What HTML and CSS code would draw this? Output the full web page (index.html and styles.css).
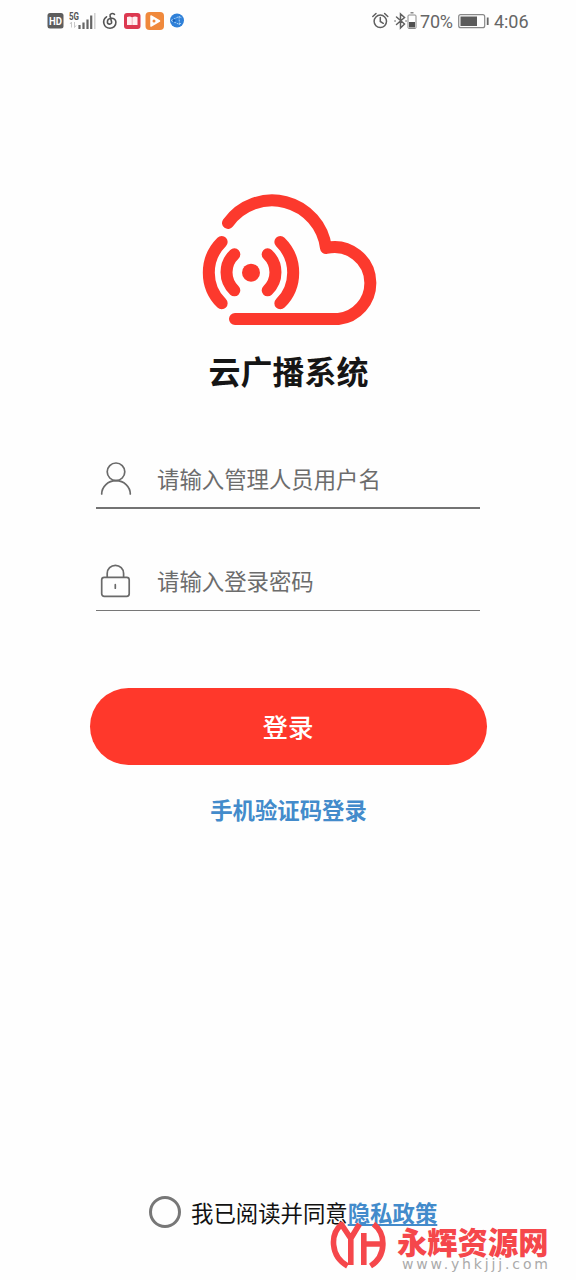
FILE: index.html
```html
<!DOCTYPE html>
<html lang="zh-CN">
<head>
<meta charset="utf-8">
<title>云广播系统</title>
<link rel="stylesheet" href="styles.css">
</head>
<body>
<main class="screen">
  <header class="status">
    <svg class="status-left" viewBox="0 0 150 32" width="150" height="32">
      <rect x="7.500" y="8" width="16" height="15.500" rx="2.500" fill="#5d5d5d"/>
      <text x="9" y="19.700" class="hd" textLength="13" lengthAdjust="spacingAndGlyphs">HD</text>
      <text x="29" y="14.500" class="net" textLength="10" lengthAdjust="spacingAndGlyphs">5G</text>
      <path d="M31.500 17v5.500M30 19l1.500-2M34.500 17v5.500l1.500-2" stroke="#c9c9c9" fill="none"/>
      <path d="M39.500 20v4M43.500 17.500V24M47.500 14.500V24M51.200 10.500V24" stroke="#666" stroke-width="2.200"/>
      <path d="M54.800 8v16" stroke="#d0d0d0" stroke-width="1.500"/>
      <path d="M74.500 9.300c-2-1.500-5-.5-4.400 1.900l1.500 5.800c.4 2.700-4 2.800-4.200.2-.2-4.700 8.200-5.700 8.500-.2.200 4-2.700 6.200-5.900 6.200-6.800-.2-8.200-8.200-3.500-11.400" fill="none" stroke="#555" stroke-width="1.600" stroke-linecap="round"/>
      <rect x="84" y="8" width="16.500" height="16" rx="3" fill="#dc3850"/>
      <path d="M87 12q3-1 5.200.4 2.200-1.400 5.300-.4v8H87z" fill="#ffeef0"/>
      <path d="M92.200 12.500V20" stroke="#efa3ae" stroke-width=".8"/>
      <rect x="105.500" y="7" width="18.500" height="18" rx="4" fill="#f0893c"/>
      <path d="M111 11l8.500 5-8.500 5z" fill="#fff" stroke="#fff" stroke-width="1.500" stroke-linejoin="round"/>
      <circle cx="114" cy="16" r="1.500" fill="#f0893c"/>
      <circle cx="137" cy="15.500" r="7" fill="#2f80d8"/>
      <path d="M131 15.500l8-4 .5 8zM139 11.500l3 1.500M139.500 19.500l2-2" fill="none" stroke="#b9dcfb" stroke-width=".9" stroke-dasharray="2 1"/>
      <circle cx="134" cy="15.500" r="1.300" fill="#145bb5"/>
    </svg>
    <svg class="status-right" viewBox="0 0 170 32" width="170" height="32">
      <g fill="none" stroke="#606060" stroke-width="1.500" stroke-linecap="round">
        <circle cx="15.300" cy="16.300" r="6.200"/>
        <path d="M15.300 12.500v4l3 1.800M7.800 11.500l3.200-3M22.800 11.500l-3.200-3"/>
        <path d="M31.500 12l8 7-4 4V9l4 3.500-8 7M30 16h.1M41 16h.1"/>
      </g>
      <rect x="43" y="10" width="8" height="13.500" rx="1" fill="none" stroke="#888"/>
      <path d="M45.500 7.800h3" stroke="#777" stroke-width="1.300"/>
      <rect x="44" y="17" width="6" height="5.500" fill="#505050"/>
      <text x="55" y="22.500" class="clock" textLength="33">70%</text>
      <rect x="93.700" y="9.700" width="26" height="13" rx="2" fill="none" stroke="#888" stroke-width="1.200"/>
      <rect x="95.500" y="11.500" width="16.500" height="9.500" fill="#5b5b5b"/>
      <path d="M122.700 12.500v7.500" stroke="#666" stroke-width="1.800"/>
      <text x="129" y="22.500" class="clock" textLength="34.500">4:06</text>
    </svg>
  </header>

  <section class="brand">
    <svg class="logo" viewBox="0 0 600 450">
      <g fill="none" stroke="#fc392d" stroke-width="36" stroke-linecap="round" stroke-linejoin="round">
        <path d="M114 114A163 163 0 0 1 408 189A108 108 0 0 1 541 293A108 108 0 0 1 445 402H135"/>
        <path d="M95 171A129 129 0 0 0 95 355M271 171A129 129 0 0 1 271 355"/>
        <path d="M133 208A74 74 0 0 0 133 316M233 208A74 74 0 0 1 233 316"/>
      </g>
      <circle cx="183" cy="263" r="27" fill="#fc392d"/>
    </svg>
    <h1 class="title">云广播系统</h1>
  </section>

  <form class="form">
    <label class="field field-user">
      <svg class="field-icon" viewBox="0 0 36 38" fill="none" stroke="#6a6a6a" stroke-width="1.700" stroke-linecap="round">
        <circle cx="20" cy="10.800" r="8.800"/>
        <path d="M5.700 33a14.300 13.400 0 0 1 28.600 0"/>
      </svg>
      <span>请输入管理人员用户名</span>
    </label>
    <label class="field field-password">
      <svg class="field-icon" viewBox="0 0 36 38" fill="none" stroke="#6a6a6a" stroke-width="1.700" stroke-linecap="round">
        <rect x="5.700" y="15.300" width="27.500" height="19" rx="2.500"/>
        <path d="M11.200 15V11.500a8.200 8.200 0 0 1 16.400 0v3.500M19.300 22.700v3.500"/>
      </svg>
      <span>请输入登录密码</span>
    </label>
    <button class="submit" type="button">登录</button>
    <a class="sms">手机验证码登录</a>
  </form>

  <footer class="agree">
    <span class="radio"></span>
    <span class="agree-text">我已阅读并同意<a class="policy">隐私政策</a></span>
  </footer>

  <aside class="watermark">
    <svg class="mark" viewBox="0 0 56 50" width="56" height="50" fill="none" stroke="#f5474b" stroke-width="5.600" stroke-linejoin="round">
      <path d="M17.500 46C0 36 0 14 11.500 4.500L20.800 18.500 29.500 4M20.800 18V45"/>
      <path d="M43.500 4C56.500 14 56.500 36 40.500 46M33.800 13V45M33.800 24H52"/>
    </svg>
    <div class="mark-text">
      <div class="mark-name">永辉资源网</div>
      <svg class="mark-url" width="154" height="13" viewBox="0 0 154 13"><text x="2" y="10" textLength="146">www.yhkjjj.com</text></svg>
    </div>
  </aside>
</main>
</body>
</html>
```
FILE: styles.css
```css
* { box-sizing: border-box; }
body { margin: 0; background: #fff; }
.screen {
  position: relative;
  display: flex;
  flex-direction: column;
  width: 576px;
  height: 1280px;
  overflow: hidden;
  background: #fefefe;
  font-family: "Noto Sans CJK SC", sans-serif;
}
.status {
  display: flex;
  justify-content: space-between;
  height: 37px;
  padding: 5px 41px 0 40px;
}
.status svg { flex: none; }
.hd { font: bold 10.5px Roboto, sans-serif; fill: #fff; }
.net { font: bold 10px Roboto, sans-serif; fill: #555; }
.clock { font: 18px Roboto, sans-serif; fill: #666; }
.brand {
  display: flex;
  flex-direction: column;
  align-items: center;
  padding-top: 148px;
}
.logo { width: 200px; height: 150px; margin-left: 4px; }
.title {
  margin: 11px 0 0 1px;
  font-size: 32px;
  line-height: 48px;
  font-weight: 700;
  color: #151515;
}
.form {
  display: flex;
  flex-direction: column;
  align-items: center;
  padding-top: 54px;
}
.field {
  display: flex;
  align-items: flex-start;
  gap: 25px;
  width: 384px;
  color: #6c6c6c;
  font-size: 22.4px;
  line-height: 36px;
}
.field-icon { width: 36px; height: 38px; }
.field-user { height: 61px; padding-top: 12px; border-bottom: 2px solid #737373; }
.field-user .field-icon { margin-top: 1px; }
.field-password { height: 102px; padding-top: 53px; border-bottom: 1px solid #777; }
.submit {
  width: 397px;
  height: 77px;
  margin-top: 77px;
  padding: 0 0 2px;
  border: 0;
  border-radius: 39px;
  background: #ff382b;
  color: #fff;
  font: 500 25.5px/75px "Noto Sans CJK SC", sans-serif;
}
.sms {
  margin: 27px 0 0 1px;
  color: #438bcb;
  font-size: 22.4px;
  line-height: 34px;
  font-weight: 700;
}
.agree {
  display: flex;
  align-items: center;
  gap: 10px;
  height: 36px;
  margin: auto 0 50px 149px;
}
.radio {
  width: 32px;
  height: 32px;
  border: 3px solid #777;
  border-radius: 50%;
}
.agree-text { font-size: 22.4px; line-height: 36px; color: #111; }
.policy {
  color: #438bcb;
  font-weight: 700;
  text-decoration: underline;
  text-decoration-thickness: 1.500px;
  text-underline-offset: 2px;
}
.watermark {
  position: absolute;
  left: 330px;
  top: 1220px;
  display: flex;
  gap: 11px;
}
.mark-name {
  height: 39px;
  color: #f5474b;
  font-size: 30.3px;
  line-height: 42px;
  font-weight: 900;
  white-space: nowrap;
}
.mark-url { display: block; margin-left: 3px; overflow: visible; }
.mark-url text { font: 14px "DejaVu Sans", sans-serif; fill: #aaa; }
```
